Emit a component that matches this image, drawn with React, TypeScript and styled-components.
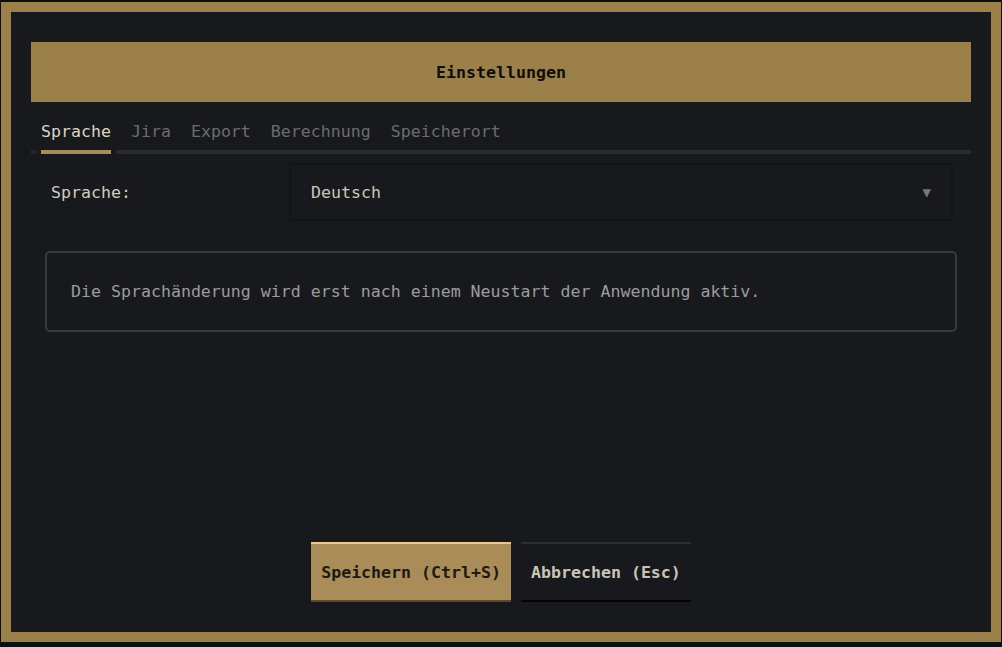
import React, { useState } from "react";
import styled, { createGlobalStyle } from "styled-components";

const GlobalStyle = createGlobalStyle`
  html, body {
    margin: 0;
    padding: 0;
    background: #0d0e10;
  }
  body {
    font-family: "DejaVu Sans Mono", "Liberation Mono", monospace;
  }
`;

const Screen = styled.div`
  width: 1002px;
  height: 647px;
  padding: 2px 0 0 1px;
  box-sizing: border-box;
`;

const Dialog = styled.div`
  width: 1000px;
  height: 640px;
  box-sizing: border-box;
  border: 10px solid #9b8049;
  background: #18191d;
  padding: 30px 20px 30px 20px;
  display: flex;
  flex-direction: column;
`;

const Header = styled.div`
  height: 60px;
  background: #9b8049;
  display: flex;
  align-items: center;
  justify-content: center;
  color: #0e0e0e;
  font-weight: bold;
  font-size: 16.6px;
`;

const TabList = styled.div`
  display: flex;
  margin-top: 18px;
`;

const Tab = styled.button<{ $active?: boolean }>`
  background: none;
  border: none;
  padding: 0 10px;
  height: 24px;
  font-family: inherit;
  font-size: 16.6px;
  line-height: 24px;
  cursor: pointer;
  color: ${(p) => (p.$active ? "#d9d5c5" : "#6b6c6e")};
`;

const Track = styled.div`
  display: flex;
  gap: 5px;
  height: 4px;
  margin-top: 6px;
`;

const TrackPiece = styled.div<{ $w?: number; $color: string }>`
  background: ${(p) => p.$color};
  ${(p) => (p.$w ? `width: ${p.$w}px;` : "flex: 1;")}
`;

const Row = styled.div`
  display: flex;
  align-items: center;
  margin-top: 9px;
  padding: 0 18px 0 20px;
`;

const Label = styled.div`
  width: 238px;
  color: #d0ccbd;
  font-size: 16.6px;
`;

const Select = styled.div`
  flex: 1;
  height: 58px;
  box-sizing: border-box;
  border: 2px solid #131417;
  background: #18191d;
  display: flex;
  align-items: center;
  justify-content: space-between;
  padding: 0 20px;
  color: #cbc7b8;
  font-size: 16.6px;
`;

const Caret = styled.span`
  color: #77787a;
  font-size: 14px;
`;

const Notice = styled.div`
  margin: 30px 14px 0 14px;
  height: 81px;
  box-sizing: border-box;
  border: 2px solid #38393d;
  border-radius: 5px;
  display: flex;
  align-items: center;
  padding: 0 24px;
  color: #9c9c9c;
  font-size: 16.6px;
`;

const Footer = styled.div`
  margin-top: auto;
  display: flex;
  justify-content: center;
  gap: 10px;
`;

const Button = styled.button<{ $primary?: boolean }>`
  height: 60px;
  box-sizing: border-box;
  padding: 0 10px;
  font-family: inherit;
  font-weight: bold;
  font-size: 16.6px;
  cursor: pointer;
  border: none;
  border-top: 2px solid ${(p) => (p.$primary ? "#ecc98a" : "#2c2d31")};
  border-bottom: 2px solid ${(p) => (p.$primary ? "#5c4a22" : "#050506")};
  background: ${(p) => (p.$primary ? "#a98c57" : "#18191d")};
  color: ${(p) => (p.$primary ? "#1b1a16" : "#c9c5b5")};
`;

const tabs = ["Sprache", "Jira", "Export", "Berechnung", "Speicherort"];

export default function App() {
  const [active, setActive] = useState(0);
  return (
    <>
      <GlobalStyle />
      <Screen>
        <Dialog>
          <Header>Einstellungen</Header>
          <TabList>
            {tabs.map((t, i) => (
              <Tab key={t} $active={i === active} onClick={() => setActive(i)}>
                {t}
              </Tab>
            ))}
          </TabList>
          <Track>
            <TrackPiece $w={5} $color="#25262a" />
            <TrackPiece $w={70} $color="#a98c57" />
            <TrackPiece $color="#2a2b2f" />
          </Track>
          <Row>
            <Label>Sprache:</Label>
            <Select>
              <span>Deutsch</span>
              <Caret>▼</Caret>
            </Select>
          </Row>
          <Notice>Die Sprachänderung wird erst nach einem Neustart der Anwendung aktiv.</Notice>
          <Footer>
            <Button $primary>Speichern (Ctrl+S)</Button>
            <Button>Abbrechen (Esc)</Button>
          </Footer>
        </Dialog>
      </Screen>
    </>
  );
}
